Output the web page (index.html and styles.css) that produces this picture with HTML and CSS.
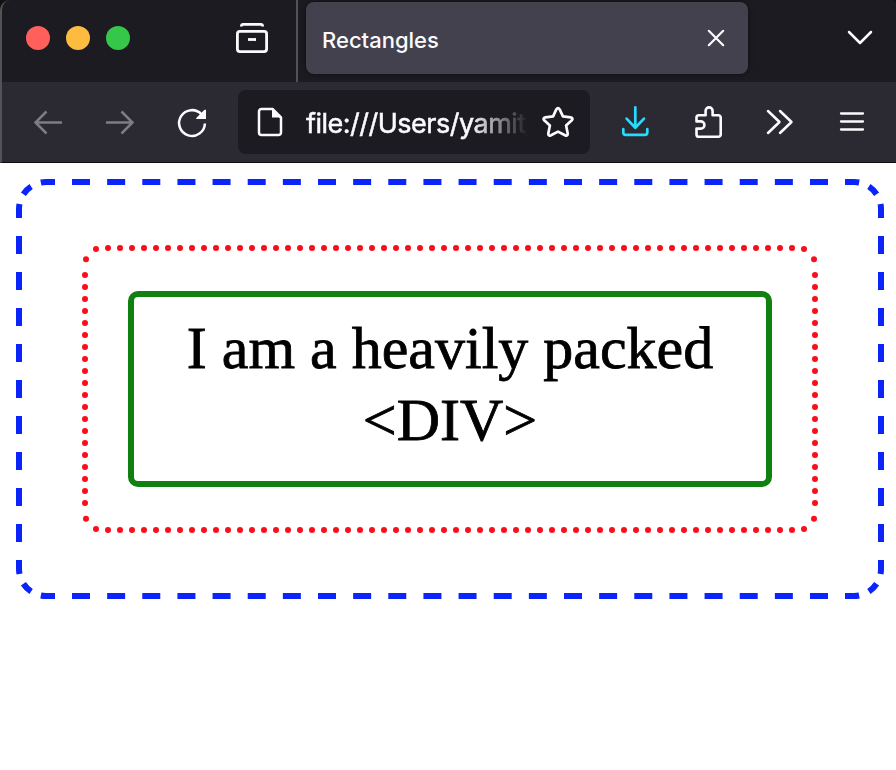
FILE: index.html
```html
<!DOCTYPE html>
<html lang="en">
<head>
<meta charset="utf-8">
<title>Rectangles</title>
<link rel="stylesheet" href="styles.css">
</head>
<body>
<div class="window">
  <header class="tabbar">
    <div class="lights"><i class="light red"></i><i class="light amber"></i><i class="light green"></i></div>
    <svg class="icon view" viewBox="0 0 40 40"><path d="M9.400 7.400V7a1.700 1.700 0 0 1 1.700-1.600h17.800A1.700 1.700 0 0 1 30.600 7v.4"/><rect x="5.400" y="12.400" width="29.200" height="20.200" rx="2.500"/><path d="M16 20.500h8"/></svg>
    <div class="tab"><span class="tab-title">Rectangles</span>
      <svg class="close" viewBox="0 0 20 20"><path d="M2.800 2.800l14.400 14.400M17.200 2.800L2.800 17.200"/></svg>
    </div>
    <svg class="icon chevron" viewBox="0 0 40 40"><path d="M9 14l11 11 11-11"/></svg>
  </header>
  <nav class="toolbar">
    <svg class="icon dim back" viewBox="0 0 40 40"><path d="M34 20.500H7M18.500 9.500l-11 11 11 11"/></svg>
    <svg class="icon dim forward" viewBox="0 0 40 40"><path d="M6 20.500h27M21.500 9.500l11 11-11 11"/></svg>
    <svg class="icon reload" viewBox="0 0 40 40"><path d="M29.500 11.300A12.900 12.900 0 1 0 32.900 20.500"/><path class="fill" d="M34 6.800v9.300H24.200q-.2-.8.500-1.500l7.500-7.600q.8-.6 1.800-.2z"/></svg>
    <div class="urlbar">
      <svg class="icon page" viewBox="0 0 40 40"><path d="M22 6.900H11.500A2.500 2.500 0 0 0 9 9.400v21.200a2.500 2.500 0 0 0 2.500 2.500h17a2.500 2.500 0 0 0 2.500-2.500V15.500L22.500 7z"/><path class="fill" d="M22 7v8.500h9.500z"/></svg>
      <span class="url">file:///Users/yamit/</span>
      <svg class="icon star" viewBox="0 0 40 40"><path d="M18.300 7.400q1.700-2.500 3.400 0l3.200 7 7.700.9q3 .8 1.200 3l-5.700 5.300 1.600 8q.1 2.900-2.700 1.600L20 29.600l-7 3.600q-2.800 1.300-2.700-1.600l1.600-8-5.700-5.300q-1.800-2.200 1.200-3l7.700-.9z"/></svg>
    </div>
    <svg class="icon download" viewBox="0 0 40 40"><path d="M20.300 5.300v20.500M11.600 16.600l8.700 9.200 8.700-9.200"/><path d="M8.300 27.200v3.300a2.300 2.300 0 0 0 2.300 2.300h19.400a2.300 2.300 0 0 0 2.300-2.300v-3.300"/></svg>
    <svg class="icon puzzle" viewBox="0 0 40 40"><path d="M16.600 15.300V10.900a3.500 3.500 0 0 1 7 0v4.400h5.800a2.300 2.300 0 0 1 2.300 2.300v16.800a2.300 2.300 0 0 1-2.300 2.300H9.800A2.300 2.300 0 0 1 7.500 34.400v-5.800h4.300a3.600 3.600 0 0 0 0-7.200H7.500v-3.800a2.300 2.300 0 0 1 2.300-2.300z"/></svg>
    <svg class="icon more" viewBox="0 0 40 40"><path d="M8 9l11.500 11L8 31M20 9l11.500 11L20 31"/></svg>
    <svg class="icon menu" viewBox="0 0 40 40"><path d="M9 11.500h22M9 19.500h22M9 27.500h22"/></svg>
  </nav>
  <main class="content">
    <div class="outer">
      <div class="middle">
        <div class="inner">I am a heavily packed &lt;DIV&gt;</div>
      </div>
      <svg class="frames" viewBox="16 179 868 420">
        <defs><path id="corner" d="M55 182H46A27 27 0 0 0 19 209V218"/></defs>
        <g class="dashes">
          <path class="row" d="M72 182H828M72 596H828"/>
          <path class="col" d="M19 236V542M881 236V542"/>
          <g class="corners"><use href="#corner"/><use href="#corner" transform="translate(900 0) scale(-1 1)"/><use href="#corner" transform="translate(0 778) scale(1 -1)"/><use href="#corner" transform="translate(900 778) scale(-1 -1)"/></g>
        </g>
        <g class="dots">
          <path d="M108 248H792.100M108 530H792.100M85 275V503.100M815 275V503.100"/>
          <path d="M96 249h.01M86 259.200h.01M804 249h.01M814 259.200h.01M96 529h.01M86 518.800h.01M804 529h.01M814 518.800h.01"/>
        </g>
      </svg>
    </div>
  </main>
</div>
</body>
</html>
```
FILE: styles.css
```css
* { box-sizing: border-box; }
body { margin: 0; background: #fff; overflow: hidden; }
.window { width: 896px; height: 770px; background: linear-gradient(#111 12px, #fff 12px); }
.tabbar, .toolbar { display: flex; align-items: center; border-left: 2px solid #535257; }
.tabbar { height: 82px; background: #1c1b22; border-top-left-radius: 10px; border-top-right-radius: 4px; }
.toolbar { height: 81px; background: #2b2a33; border-bottom: 1px solid #0c0c0e; }
.lights { display: flex; gap: 16px; margin: 0 0 6px 24px; }
.light { width: 24px; height: 24px; border-radius: 50%; }
.red { background: #ff605c; }
.amber { background: #fdbc40; }
.green { background: #34c749; }
.icon { width: 40px; height: 40px; flex: none; fill: none; stroke: #fbfbfe; stroke-width: 2.5; stroke-linecap: round; stroke-linejoin: round; }
.icon .fill { fill: #fbfbfe; stroke: none; }
.view { margin: 0 24px 4px 102px; stroke-width: 2.8; stroke-linecap: butt; }
.tab { align-self: stretch; position: relative; display: flex; align-items: center; width: 452px; padding: 0 22px 0 24px; border-left: 2px solid #535257; z-index: 0; }
.tab::before { content: ""; position: absolute; z-index: -1; left: 8px; right: 0; top: 2px; bottom: 8px; border-radius: 8px; background: #42414d; box-shadow: 0 0 5px #0008; }
.tab-title { flex: 1; margin-top: -3px; font: 500 22px/28px Inter, sans-serif; letter-spacing: 0; color: #fbfbfe; }
.close { width: 20px; height: 20px; margin-bottom: 6px; fill: none; stroke: #fbfbfe; stroke-width: 2.2; stroke-linecap: round; }
.chevron { margin: 0 0 6px 92px; }
.dim { stroke: #7e7d83; stroke-linecap: butt; stroke-linejoin: miter; }
.back { margin-left: 26px; }
.forward { margin-left: 32px; }
.reload { margin: 1px 0 0 32px; stroke-linecap: butt; }
.urlbar { display: flex; align-items: center; width: 352px; height: 64px; margin: 0 0 0 26px; padding-left: 12px; border-radius: 8px; background: #1c1b22; }
.url { width: 222px; margin: 4px 0 0 16px; overflow: hidden; white-space: nowrap; font: 27px/40px Inter, sans-serif; letter-spacing: -.5px; color: #fbfbfe; -webkit-text-stroke: .5px #fbfbfe; mask-image: linear-gradient(90deg, #000 165px, transparent); }
.star { margin-left: 10px; stroke-width: 2.7; }
.download { margin-left: 25px; stroke: #24dcff; stroke-width: 2.7; }
.puzzle { margin: -4px 0 0 34px; stroke-width: 2.6; }
.more { margin-left: 31px; }
.menu { margin-left: 32px; stroke-width: 2.3; }
.content { height: 607px; padding: 16px 12px 0 16px; background: #fff; }
.outer { position: relative; height: 420px; padding: 66px; }
.middle { height: 288px; padding: 46px; }
.inner { height: 196px; padding: 15px 0; border: 6px solid #108010; border-radius: 10px; text-align: center; font: 60px/72px "Liberation Serif", serif; color: #000; -webkit-text-stroke: .8px #000; }
.frames { position: absolute; inset: 0; width: 868px; height: 420px; fill: none; stroke-width: 6; }
.dashes { stroke: #0b24fb; }
.row { stroke-dasharray: 18 17.143; }
.col { stroke-dasharray: 18 18; }
.corners { stroke-dasharray: 14.3 10.4 11 10.4 14.3 20; }
.dots { stroke: #fc0d1b; stroke-linecap: round; stroke-dasharray: 0 12; }
```
